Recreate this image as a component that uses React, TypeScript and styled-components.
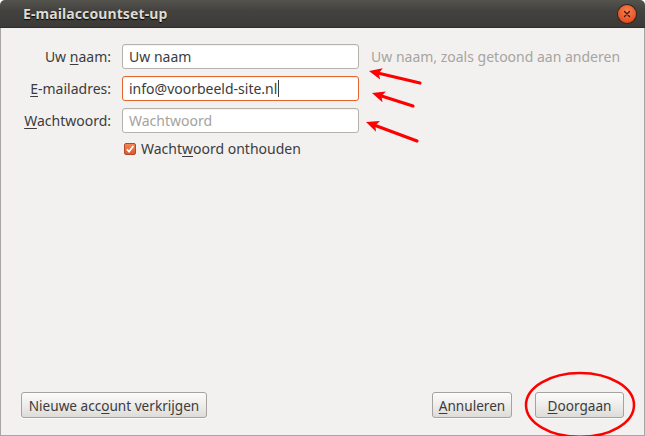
import React from 'react'
import styled, { createGlobalStyle } from 'styled-components'

const GlobalStyle = createGlobalStyle`
  html, body {
    margin: 0;
    padding: 0;
    background: #ffffff;
  }
  body {
    font-family: 'Noto Sans', 'DejaVu Sans', sans-serif;
  }
`

const Window = styled.div`
  position: relative;
  width: 645px;
  height: 436px;
  display: flex;
  flex-direction: column;
  box-sizing: border-box;
  overflow: hidden;
  border-radius: 5px 5px 0 0;
  background: #f2f1f0;
`

const TitleBar = styled.div`
  height: 28px;
  flex: 0 0 28px;
  display: flex;
  align-items: center;
  justify-content: space-between;
  padding: 0 9px 0 23px;
  background: linear-gradient(to bottom, #55534e 0%, #43423e 40%, #3b3a36 100%);
  border-bottom: 1px solid #2e2d2a;
  box-sizing: border-box;
`

const Title = styled.span`
  color: #dfdbd2;
  font-weight: bold;
  font-size: 14px;
  text-shadow: 0 1px 1px #000;
  letter-spacing: 0.1px;
`

const CloseButton = styled.div`
  width: 18px;
  height: 18px;
  border-radius: 50%;
  background: radial-gradient(circle at 50% 35%, #f7844f 0%, #e9582a 60%, #c8421d 100%);
  box-shadow: 0 0 0 1px #3a2218;
  display: flex;
  align-items: center;
  justify-content: center;
`

const Body = styled.div`
  flex: 1;
  display: flex;
  flex-direction: column;
  border-left: 1px solid #a9a6a1;
  border-right: 1px solid #a9a6a1;
  border-bottom: 1px solid #a9a6a1;
  padding: 16px 20px 17px 10px;
  box-sizing: border-box;
  font-size: 14px;
  color: #3c3c3c;
`

const Form = styled.div`
  display: grid;
  grid-template-columns: 100px 237px auto;
  column-gap: 11px;
  row-gap: 7px;
  align-items: center;
`

const Label = styled.div`
  text-align: right;
  color: #3c3c3c;
`

const Entry = styled.div<{ $focused?: boolean }>`
  height: 25px;
  box-sizing: border-box;
  border: 1px solid ${p => (p.$focused ? '#e2652e' : '#b5b1ab')};
  border-radius: 3px;
  background: #ffffff;
  padding: 0 6px;
  display: flex;
  align-items: center;
  color: #3c3c3c;
  box-shadow: inset 0 1px 1px rgba(0, 0, 0, 0.06);
`

const Placeholder = styled.span`
  color: #a5a29e;
`

const Caret = styled.span`
  display: inline-block;
  width: 1px;
  height: 17px;
  background: #3c3c3c;
  margin-left: 1px;
`

const Hint = styled.div`
  color: #a8a49f;
  padding-left: 1px;
  white-space: nowrap;
`

const CheckRow = styled.label`
  grid-column: 2 / 4;
  display: flex;
  align-items: center;
  gap: 5px;
  padding-left: 2px;
  margin-top: -1px;
`

const Check = styled.span`
  width: 12px;
  height: 12px;
  border-radius: 2px;
  box-sizing: border-box;
  border: 1px solid #b4492a;
  background: linear-gradient(to bottom, #f0875a, #dd5a2f);
  display: flex;
  align-items: center;
  justify-content: center;
`

const Spacer = styled.div`
  flex: 1;
`

const Footer = styled.div`
  display: flex;
  align-items: center;
  padding-left: 10px;
`

const Button = styled.button<{ $width: number; $gapLeft?: number }>`
  width: ${p => p.$width}px;
  height: 26px;
  box-sizing: border-box;
  padding: 0;
  margin-left: ${p => p.$gapLeft ?? 0}px;
  border: 1px solid #a6a39e;
  border-radius: 3px;
  background: linear-gradient(to bottom, #fbfbfa 0%, #eeedeb 50%, #dedcd9 100%);
  font-family: inherit;
  font-size: 13.6px;
  color: #3c3c3c;
  white-space: nowrap;
  box-shadow: 0 1px 0 rgba(255, 255, 255, 0.6);
`

const Mnemonic = styled.u`
  text-underline-offset: 2px;
`

const Annotations = styled.svg`
  position: absolute;
  left: 0;
  top: 0;
  pointer-events: none;
`

const arrows = [
  { x1: 420, y1: 83, x2: 369, y2: 71 },
  { x1: 413, y1: 106, x2: 372, y2: 93 },
  { x1: 417, y1: 141, x2: 366, y2: 122 },
]

const Arrow = ({ x1, y1, x2, y2 }: { x1: number; y1: number; x2: number; y2: number }) => {
  const ang = Math.atan2(y1 - y2, x1 - x2)
  const len = 14
  const spread = 0.42
  const ax = x2 + len * Math.cos(ang - spread)
  const ay = y2 + len * Math.sin(ang - spread)
  const bx = x2 + len * Math.cos(ang + spread)
  const by = y2 + len * Math.sin(ang + spread)
  const mx = x2 + (len - 4) * Math.cos(ang)
  const my = y2 + (len - 4) * Math.sin(ang)
  return (
    <g>
      <line x1={x1} y1={y1} x2={mx} y2={my} stroke="#ff0000" strokeWidth={3.2} strokeLinecap="round" />
      <polygon points={`${x2},${y2} ${ax},${ay} ${mx},${my} ${bx},${by}`} fill="#ff0000" />
    </g>
  )
}

const App = () => {
  return (
    <Window>
      <GlobalStyle />
      <TitleBar>
        <Title>E-mailaccountset-up</Title>
        <CloseButton>
          <svg width="8" height="8" viewBox="0 0 8 8">
            <path d="M1.5 1.5 L6.5 6.5 M6.5 1.5 L1.5 6.5" stroke="#3a1a0e" strokeWidth="1.3" strokeLinecap="round" />
          </svg>
        </CloseButton>
      </TitleBar>
      <Body>
        <Form>
          <Label>Uw <Mnemonic>n</Mnemonic>aam:</Label>
          <Entry>Uw naam</Entry>
          <Hint>Uw naam, zoals getoond aan anderen</Hint>

          <Label><Mnemonic>E</Mnemonic>-mailadres:</Label>
          <Entry $focused>info@voorbeeld-site.nl<Caret /></Entry>
          <span />

          <Label><Mnemonic>W</Mnemonic>achtwoord:</Label>
          <Entry><Placeholder>Wachtwoord</Placeholder></Entry>
          <span />

          <span />
          <CheckRow>
            <Check>
              <svg width="10" height="10" viewBox="0 0 10 10">
                <path d="M1.8 5.2 L4 7.6 L8.4 2" stroke="#ffffff" strokeWidth="1.7" fill="none" />
              </svg>
            </Check>
            <span>Wacht<Mnemonic>w</Mnemonic>oord onthouden</span>
          </CheckRow>
        </Form>
        <Spacer />
        <Footer>
          <Button $width={186}>Nieuwe acc<Mnemonic>o</Mnemonic>unt verkrijgen</Button>
          <Spacer />
          <Button $width={80}><Mnemonic>A</Mnemonic>nnuleren</Button>
          <Button $width={89} $gapLeft={23}><Mnemonic>D</Mnemonic>oorgaan</Button>
        </Footer>
      </Body>
      <Annotations width={645} height={436} viewBox="0 0 645 436">
        {arrows.map((a, i) => (
          <Arrow key={i} {...a} />
        ))}
        <ellipse cx={580} cy={405} rx={54} ry={32} fill="none" stroke="#ff0000" strokeWidth={2.5} />
      </Annotations>
    </Window>
  )
}

export default App
